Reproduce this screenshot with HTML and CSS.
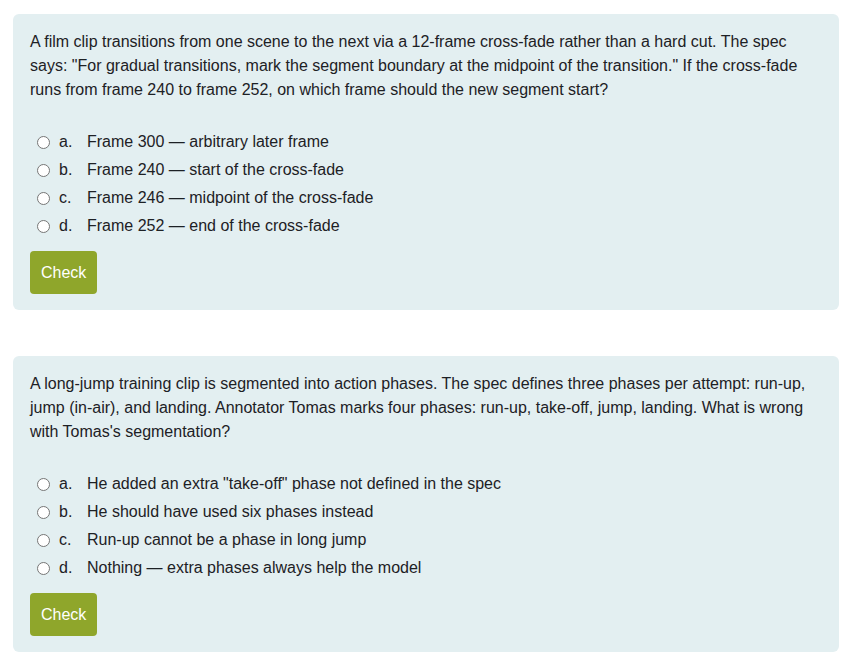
FILE: index.html
```html
<!DOCTYPE html>
<html lang="en">
<head>
    <meta charset="UTF-8">
    <meta name="viewport" content="width=device-width, initial-scale=1.0">
    <title>Video Segmentation Quiz</title>
    <link rel="stylesheet" href="styles.css">
</head>
<body>

    <div class="question">
        <div class="qtext">A film clip transitions from one scene to the next via a 12-frame cross-fade rather than a hard cut. The spec says: "For gradual transitions, mark the segment boundary at the midpoint of the transition." If the cross-fade runs from frame 240 to frame 252, on which frame should the new segment start?</div>
        <div class="answers">
            <label class="answer"><input type="radio" name="q1"><span class="letter">a.</span><span>Frame 300 — arbitrary later frame</span></label>
            <label class="answer"><input type="radio" name="q1"><span class="letter">b.</span><span>Frame 240 — start of the cross-fade</span></label>
            <label class="answer"><input type="radio" name="q1"><span class="letter">c.</span><span>Frame 246 — midpoint of the cross-fade</span></label>
            <label class="answer"><input type="radio" name="q1"><span class="letter">d.</span><span>Frame 252 — end of the cross-fade</span></label>
        </div>
        <button class="check">Check</button>
    </div>

    <div class="question">
        <div class="qtext">A long-jump training clip is segmented into action phases. The spec defines three phases per attempt: run-up, jump (in-air), and landing. Annotator Tomas marks four phases: run-up, take-off, jump, landing. What is wrong with Tomas's segmentation?</div>
        <div class="answers">
            <label class="answer"><input type="radio" name="q2"><span class="letter">a.</span><span>He added an extra "take-off" phase not defined in the spec</span></label>
            <label class="answer"><input type="radio" name="q2"><span class="letter">b.</span><span>He should have used six phases instead</span></label>
            <label class="answer"><input type="radio" name="q2"><span class="letter">c.</span><span>Run-up cannot be a phase in long jump</span></label>
            <label class="answer"><input type="radio" name="q2"><span class="letter">d.</span><span>Nothing — extra phases always help the model</span></label>
        </div>
        <button class="check">Check</button>
    </div>

</body>
</html>
```

FILE: styles.css
```css
body {
    margin: 0;
    padding: 14px 15px 0 13px;
    font-family: "Liberation Sans", Arial, sans-serif;
    font-size: 16px;
    line-height: 24px;
    color: #1d2125;
    background: #fff;
}

.question {
    background: #e3eff1;
    border-radius: 6px;
    padding: 16px 16px 16px 17px;
    margin-bottom: 46px;
}

.qtext {
    margin-bottom: 26px;
}

.answers {
    display: flex;
    flex-direction: column;
    margin-bottom: 11px;
}

.answer {
    display: flex;
    align-items: center;
    height: 28px;
}

.answer input[type="radio"] {
    appearance: none;
    width: 13px;
    height: 13px;
    margin: 0 9px 0 7px;
    border: 1px solid #767676;
    border-radius: 50%;
    background: #fff;
}

.letter {
    width: 28px;
}

.check {
    font-family: inherit;
    font-size: 16px;
    line-height: 24px;
    height: 43px;
    padding: 0 11px;
    border: none;
    border-radius: 4px;
    background: #8fa62b;
    color: #fff;
    cursor: pointer;
}

.check:hover {
    background: #7a8e22;
}
```
